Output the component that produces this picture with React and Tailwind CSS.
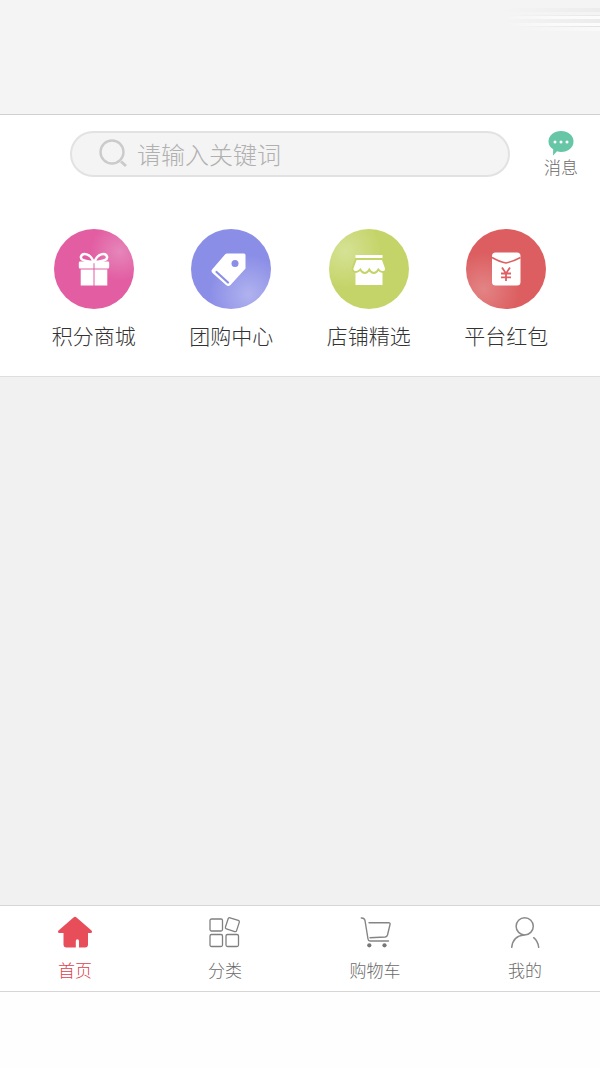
function GiftIcon() {
  return (
    <svg viewBox="0 0 80 80" className="size-20" aria-hidden="true">
      <path d="M39.500 33c-3-9-11-9.500-12.500-5.500-1 3 3 5 12.500 5.500Zm1 0c3-9 11-9.500 12.500-5.500 1 3-3 5-12.500 5.500Z" fill="none" stroke="#fff" strokeWidth="2.400" />
      <path d="M26 32.500h13.500v7H26q-1.200 0-1.200-1.200v-4.600q0-1.200 1.200-1.200ZM40.500 32.500H54q1.200 0 1.200 1.200v4.600q0 1.200-1.200 1.200H40.500ZM26.700 40.500h12.800v16H26.700ZM40.500 40.500h12.800v16H40.500Z" fill="#fff" />
    </svg>
  );
}

function TagIcon() {
  return (
    <svg viewBox="0 0 80 80" className="size-20" aria-hidden="true">
      <path d="M36 24.500h17a1.500 1.500 0 0 1 1.500 1.500v13.500L39.500 56q-2 2-4.500 0L21.500 44q-2-2 0-4L34 25.500q1-1 2-1Z" fill="#fff" />
      <circle cx="44" cy="34.500" r="3.500" fill="#8b8ee6" />
      <path d="m25.500 43 11.500 10.500" stroke="#8b8ee6" strokeWidth="2.200" strokeLinecap="round" />
    </svg>
  );
}

function ShopIcon() {
  return (
    <svg viewBox="0 0 80 80" className="size-20" aria-hidden="true">
      <path d="M26.500 40h27v16h-27zM26.500 26h27v3h-27z" fill="#fff" />
      <path
        d="M27 30h26.500l3.500 9.500q0 3.500-3.500 3.500-2.500 0-4.200-2.500Q47.500 44 44.800 44t-4.500-3.500Q38.500 44 35.800 44t-4.500-3.500Q29.500 43 27 43q-3.500 0-3.500-3.500Z"
        fill="#fff"
        stroke="#c5d469"
        strokeWidth="1.800"
      />
    </svg>
  );
}

function RedPacketIcon() {
  return (
    <svg viewBox="0 0 80 80" className="size-20" aria-hidden="true">
      <rect x="26" y="23.500" width="28.500" height="33" rx="3.500" fill="#fff" />
      <g fill="none" stroke="#de5f61">
        <path d="M26 28.500q8 4.500 14 5.500 6-1 14.500-5.500" strokeWidth="1.500" />
        <path d="m36 38.500 4 6 4-6M40 44v8M35 44.500h10M35 48.300h10" strokeWidth="1.800" />
      </g>
    </svg>
  );
}

function HomeIcon() {
  return (
    <svg viewBox="0 0 36 36" className="size-9" aria-hidden="true">
      <path
        d="M16.500 3.500q1.500-1.300 3 0L34.500 16.500q1.500 2-1 2.500H31v11.500q0 3-3 3h-6V27q0-1.800-1.600-1.800T18.800 27v6.500H9.500q-3 0-3-3V19H2.500q-2.500-.5-1-2.500Z"
        fill="#e84e5a"
      />
    </svg>
  );
}

function CategoryIcon() {
  return (
    <svg viewBox="0 0 36 36" className="size-9" fill="none" stroke="#808080" strokeWidth="1.300" aria-hidden="true">
      <rect x="3" y="5" width="12.500" height="12" rx="1.500" />
      <rect x="3" y="20.500" width="12.500" height="12" rx="1.500" />
      <rect x="19" y="20.500" width="12.500" height="12" rx="1.500" />
      <rect x="19.500" y="4.800" width="11.700" height="11.700" rx="1.500" transform="rotate(18 25.300 10.700)" />
    </svg>
  );
}

function CartIcon() {
  return (
    <svg viewBox="0 0 36 36" className="size-9" fill="none" stroke="#858585" strokeWidth="1.400" strokeLinecap="round" strokeLinejoin="round" aria-hidden="true">
      <path d="M4.300 4q3-.2 3.700 2.500l3 18.500q.3 2 2 2h18.500" />
      <path d="M12 8.700h19.500q2 0 1.500 2L30.500 21q-.5 1.800-2.300 2L13 23.700" />
      <g fill="#777" stroke="none">
        <circle cx="12.300" cy="31.300" r="2.100" />
        <circle cx="27.500" cy="31.300" r="2.100" />
      </g>
    </svg>
  );
}

function UserIcon() {
  return (
    <svg viewBox="0 0 36 36" className="size-9" fill="none" stroke="#8a8a8a" strokeWidth="1.500" strokeLinecap="round" aria-hidden="true">
      <circle cx="17.700" cy="12.300" r="8.600" />
      <path d="M4.700 33.300Q6 22 17 21M26.700 23.700q4.200 3.500 5 9.600" />
    </svg>
  );
}

const shortcuts = [
  { label: "积分商城", Icon: GiftIcon, bg: "bg-[radial-gradient(circle_at_82%_28%,#e686ba_0%,#e25da2_34%)]" },
  { label: "团购中心", Icon: TagIcon, bg: "bg-[radial-gradient(circle_at_72%_82%,#b0b2ef_0%,#8b8ee6_45%)]" },
  { label: "店铺精选", Icon: ShopIcon, bg: "bg-[radial-gradient(circle_at_20%_28%,#d6e295_0%,#c5d469_42%)]" },
  { label: "平台红包", Icon: RedPacketIcon, bg: "bg-[radial-gradient(circle_at_22%_75%,#e38485_0%,#dc5e60_42%)]" },
];

const tabs = [
  { label: "首页", Icon: HomeIcon, color: "text-[#dc3f4d]" },
  { label: "分类", Icon: CategoryIcon, color: "text-[#6a6a6a]" },
  { label: "购物车", Icon: CartIcon, color: "text-[#6a6a6a]" },
  { label: "我的", Icon: UserIcon, color: "text-[#6a6a6a]" },
];

export default function App() {
  return (
    <div className="min-h-screen flex flex-col bg-[#f1f1f1] font-['Noto_Sans_CJK_SC',sans-serif] font-light">
      <header className="h-[115px] shrink-0 flex flex-col items-end pt-2 bg-[#f4f4f4] border-b border-[#d0d0d0]">
        {/* Faint stripes fading in from the right */}
        <div className="w-24 h-1 bg-linear-to-r from-[#f4f4f4] to-[#ececec]" />
        <div className="w-24 h-[3px]" />
        <div className="w-24 h-px bg-linear-to-r from-[#f4f4f4] to-[#e8e8e8]" />
        <div className="w-24 h-[3px] bg-linear-to-r from-[#f4f4f4] via-[#fafafa] to-[#fcfcfc]" />
        <div className="w-24 h-1 bg-linear-to-r from-[#f4f4f4] to-[#ececec]" />
        <div className="w-24 h-[3px] bg-linear-to-r from-[#f4f4f4] via-[#fafafa] to-[#fcfcfc]" />
        <div className="w-20 h-px bg-linear-to-r from-[#f4f4f4] to-[#e2e2e2]" />
        <div className="w-20 h-1 bg-linear-to-r from-[#f4f4f4] to-[#f9f9f9]" />
      </header>

      <main>
        <section className="bg-white border-b border-[#dedede] pt-4 pb-[25px]">
          <div className="flex pl-[70px]">
            <label className="flex flex-1 items-center h-[46px] gap-2 pl-[27px] rounded-full border-2 border-[#e2e2e2] bg-[#f4f4f4]">
              <svg viewBox="0 0 30 30" className="size-[30px]" fill="none" stroke="#cbcbcb" aria-hidden="true">
                <circle cx="13" cy="13" r="11.500" strokeWidth="2.400" />
                <path d="m22 22.500 5 4.500" strokeWidth="3" />
              </svg>
              <input
                type="text"
                aria-label="搜索"
                placeholder="请输入关键词"
                className="flex-1 min-w-0 bg-transparent text-[24px] outline-none placeholder:text-[#b0b0b0]"
              />
            </label>
            <button type="button" className="w-[90px] flex flex-col items-center pl-3 text-[17px] leading-5 text-[#6a6a6a]">
              <svg viewBox="0 0 26 26" className="size-[26px] shrink-0" aria-hidden="true">
                <path d="M13 0c7 0 12.500 4.500 12.500 10.500S20 21 13 21q-2 0-4-.7L5 24.500l.2-6.200Q.5 15.500.5 10.500C.5 4.500 6 0 13 0Z" fill="#66c6a5" />
                <g fill="#fff">
                  <circle cx="7" cy="11" r="1.500" />
                  <circle cx="13" cy="11" r="1.500" />
                  <circle cx="19" cy="11" r="1.500" />
                </g>
              </svg>
              消息
            </button>
          </div>

          <div className="grid grid-cols-4 px-[25px] pt-13">
            {shortcuts.map(({ label, Icon, bg }) => (
              <button key={label} type="button" className="flex flex-col items-center gap-[10px] text-[21px] leading-8 text-[#333]">
                <span className={`rounded-full ${bg}`}>
                  <Icon />
                </span>
                {label}
              </button>
            ))}
          </div>
        </section>
      </main>

      <nav className="mt-auto grid grid-cols-4 h-[87px] bg-white border-y border-[#d6d6d6]">
        {tabs.map(({ label, Icon, color }) => (
          <a key={label} href="#" className={`flex flex-col items-center pt-2 gap-2 text-[17px] leading-6 ${color}`}>
            <Icon />
            {label}
          </a>
        ))}
      </nav>
      <footer className="h-[76px] shrink-0 bg-[#fefefe]" />
    </div>
  );
}
